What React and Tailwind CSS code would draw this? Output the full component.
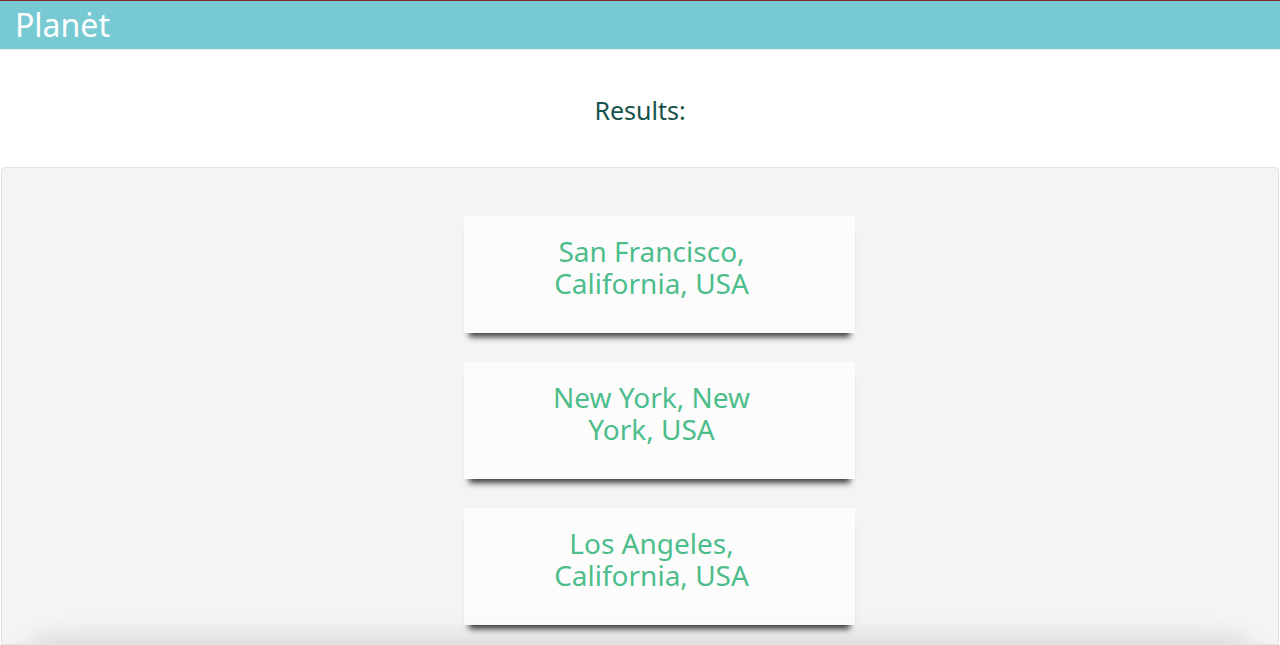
const places = [
  'San Francisco, California, USA',
  'New York, New York, USA',
  'Los Angeles, California, USA',
]

function PlaceCard({ name }) {
  return (
    <div className="flex h-[117px] w-[391px] items-center justify-center bg-[#fcfcfc] pr-[16px] pb-[16px] shadow-[0_9px_6px_-5px_rgba(0,0,0,0.75)]">
      <p className="w-[210px] text-center text-[28px] leading-[32px] text-[#4dbd8b]">{name}</p>
    </div>
  )
}

export default function App() {
  return (
    <div className="h-[645px] overflow-hidden bg-white font-['Noto_Sans',sans-serif]">
      <header className="h-[50px] border-t border-[#7d2b2e] border-b border-b-[#e6eef0] bg-[#77cad4] px-[15px]">
        <h1 className="text-[32px] leading-[48px] text-white">Planėt</h1>
      </header>
      <div className="flex h-[117px] items-center justify-center pt-[4px]">
        <h2 className="text-[25px] text-[#17524a]">Results:</h2>
      </div>
      <main className="relative mx-px h-[478px] overflow-hidden rounded-t-[4px] border border-[#e2e2e2] bg-[#f4f4f4]">
        <div className="flex flex-col items-center gap-[29px] pt-[48px] pl-[39px]">
          {places.map((p) => (
            <PlaceCard key={p} name={p} />
          ))}
        </div>
        <div className="absolute inset-x-[30px] top-[478px] h-[40px] rounded-[30px] bg-[#e8e8e8] shadow-[0_0_28px_8px_rgba(0,0,0,0.12)]" />
      </main>
    </div>
  )
}
